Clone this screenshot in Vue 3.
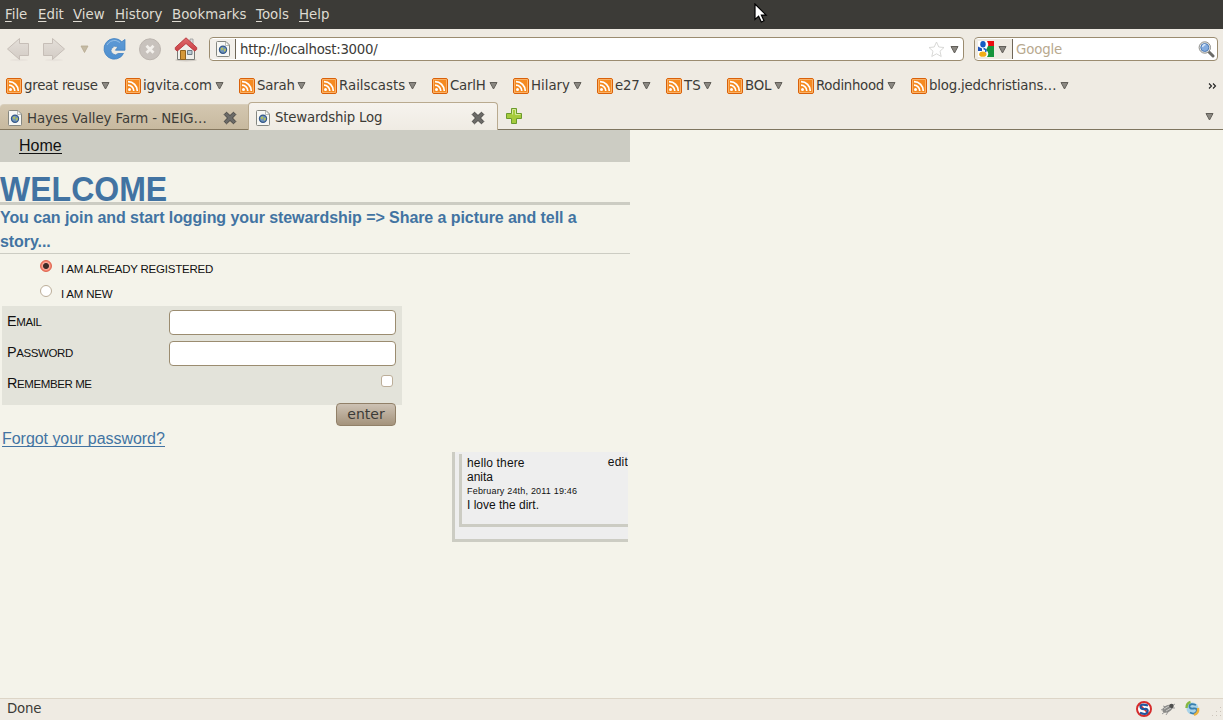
<script setup>
import { h } from 'vue'

const menus = [
  ['File', 33], ['Edit', 35], ['View', 42], ['History', 57],
  ['Bookmarks', 84], ['Tools', 43], ['Help', 40]
]
// label, slot width, letter spacing
const feeds = [
  ['great reuse', 119, -0.26], ['igvita.com', 114, -0.1], ['Sarah', 82, -0.2], ['Railscasts', 111, 0],
  ['CarlH', 81, -0.2], ['Hilary', 84, 0], ['e27', 69, -0.2], ['TS', 61, 0], ['BOL', 71, -0.2],
  ['Rodinhood', 113, -0.3], ['blog.jedchristians…', 173, -0.19]
]

const Arrow = () => h('svg', { width: 9, height: 9, viewBox: '0 0 9 9' }, [
  h('path', { d: 'M1 1.5h7L4.5 8z', fill: '#8b8882', stroke: '#625f59', 'stroke-width': 1 })
])
const PageIcon = () => h('svg', { width: 14, height: 16, viewBox: '0 0 14 16' }, [
  h('path', { d: 'M1.500.5h8.500l3.500 3.500v10.500q0 1-1 1h-11q-1 0-1-1v-13q0-1 1-1z', fill: '#f7f7f4', stroke: '#858781' }),
  h('path', { d: 'M9.500.8v3.700h3.700z', fill: '#fff', stroke: '#aaaca6', 'stroke-width': 0.8 }),
  h('circle', { cx: 7, cy: 8.7, r: 3.6, fill: '#6f94bd', stroke: '#34588a', 'stroke-width': 1.2 }),
  h('path', { d: 'M4.500 7.500l2-1.300 1 1.300-1.500 2.200zM7.500 8.500l2-1 .5 1.500-1.500 2z', fill: '#b3c05c' })
])
const CloseIcon = () => h('svg', { width: 14, height: 14, viewBox: '0 0 14 14' }, [
  h('path', { d: 'M3.500 1.200L7 4.500l3.500-3.300 2.300 2.300L9.500 7l3.300 3.500-2.300 2.300L7 9.500l-3.500 3.300-2.300-2.300L4.500 7 1.200 3.500z', fill: '#6c6b68', stroke: '#454441' })
])
</script>

<template>
  <div class="browser">
    <header class="menubar">
      <span v-for="m in menus" :key="m[0]" :style="{ width: m[1] + 'px' }"><u>{{ m[0][0] }}</u>{{ m[0].slice(1) }}</span>
      <svg class="cursor" width="14" height="21" viewBox="0 0 14 21">
        <path d="M1 1v15.500l3.600-3.300 2.700 5.800 2.700-1.200-2.600-5.700h4.700z" fill="#fff" stroke="#000" stroke-width="1.200" />
      </svg>
    </header>

    <div class="toolbar">
      <svg class="tools" width="209" height="40" viewBox="0 0 209 40">
        <defs>
          <linearGradient id="grey" x2="0" y2="1"><stop stop-color="#e4dfd9" /><stop offset="1" stop-color="#d3ccc5" /></linearGradient>
          <linearGradient id="blue" x2="0" y2="1"><stop stop-color="#5d99d5" /><stop offset="1" stop-color="#4f90d0" /></linearGradient>
          <linearGradient id="roof" x2="0" y2="1"><stop stop-color="#e06b6e" /><stop offset="1" stop-color="#cb3f44" /></linearGradient>
        </defs>
        <g fill="#e8e3dc"><ellipse cx="19" cy="31" rx="9" ry="1.200" /><ellipse cx="54" cy="31" rx="9" ry="1.200" /></g>
        <g fill="url(#grey)" stroke="#c6beb7">
          <path d="M7.500 20L19.500 9.500v5h9v12h-9v4z" />
          <path d="M64.500 20L52.500 9.500v5h-9v12h9v4z" />
        </g>
        <path d="M81 17h7l-3.500 6.500z" fill="#c5bba5" stroke="#b6aa91" stroke-width=".8" />
        <path d="M123.500 24.500h-5.300a4.200 4.200 0 1 1-.4-6.300l-2.400 3h9.600v-10.800l-3.200 2.400A10.300 10.300 0 1 0 123.500 24.500z" fill="url(#blue)" stroke="#4381c0" stroke-width=".8" />
        <path d="M107 16q3-5 9-4.500l4 2" fill="none" stroke="#91bce5" />
        <circle cx="150" cy="20.300" r="10.500" fill="#c8c2bd" stroke="#bbb4ae" />
        <path d="M146.500 16.800l7 7m0-7l-7 7" stroke="#f3f0ec" stroke-width="2.800" />
        <ellipse cx="186" cy="31" rx="11" ry="1.500" fill="#d0cbc4" />
        <path d="M177.500 19l8.500-7 8.500 7v11.500h-17z" fill="#efeeea" stroke="#777a75" />
        <path d="M190 10h3v5h-3z" fill="#ddd" stroke="#999" stroke-width=".8" />
        <path d="M175.300 20.500v-2L186 8.800l10.700 9.700v2l-2 1.500-8.700-7.500-8.700 7.500z" fill="url(#roof)" stroke="#b5363b" stroke-width=".9" />
        <path d="M180.500 21.500h5v9h-5z" fill="#d4983a" stroke="#94631c" />
        <path d="M187.500 21.500h4.500v4h-4.500z" fill="#b9cbd5" stroke="#6e7d87" />
      </svg>
      <div class="field address">
        <span class="site"><PageIcon /></span>
        <span class="url">http://localhost:3000/</span>
        <svg width="17" height="17" viewBox="0 0 17 17"><path d="M8.500 1l2.300 5 5.200.5-4 3.700 1.200 5.300-4.700-2.700-4.700 2.700L5 10.200 1 6.500 6.200 6z" fill="#fff" stroke="#d4d4d1" stroke-width=".9" /></svg>
        <Arrow class="field-arrow" />
      </div>
      <div class="field search">
        <span class="engine">
          <svg width="16" height="16" viewBox="0 0 16 16">
            <path d="M0 0h16v16H0z" fill="#fff" />
            <path d="M9 0h7v6h-6q1-3-1-6z" fill="#ed0c10" />
            <path d="M10 5h6v11H9q3-4-1-7z" fill="#16953c" />
            <path d="M0 5.500l4 2v2.500H0z" fill="#1c52bb" />
            <ellipse cx="5" cy="3.300" rx="2.700" ry="3.300" fill="#155bc3" />
            <path d="M5.500 7.500q3.500 1 2 3.500" fill="none" stroke="#155bc3" stroke-width="1.600" />
            <ellipse cx="4.800" cy="13.200" rx="3.600" ry="2.600" fill="#f1ad16" />
          </svg>
          <Arrow />
        </span>
        <span class="hint">Google</span>
        <svg width="17" height="17" viewBox="0 0 17 17">
          <path d="M10.500 10.500l4.500 4.500" stroke="#6b6b68" stroke-width="3" stroke-linecap="round" />
          <circle cx="6.800" cy="6.500" r="5.700" fill="#e7e7e4" stroke="#90908c" />
          <circle cx="6.800" cy="6.500" r="4" fill="#84acdf" stroke="#507db6" />
          <path d="M4.500 6q.5-2.500 3-2.500" stroke="#d9e9fb" stroke-width="1.300" fill="none" />
        </svg>
      </div>
    </div>

    <div class="bookmarks">
      <span v-for="f in feeds" :key="f[0]" class="feed" :style="{ width: f[1] + 'px', letterSpacing: f[2] + 'px' }">
        <svg width="16" height="16" viewBox="0 0 16 16">
          <rect x=".5" y=".5" width="15" height="15" rx="1.500" fill="#f58a21" stroke="#d9610a" />
          <path d="M1.500 1.500h13v13h-13z" fill="none" stroke="#fbb267" />
          <circle cx="4.500" cy="11.600" r="1.500" fill="#fff" />
          <path d="M3 7.200a5.800 5.800 0 0 1 5.800 5.800M3 3.700a9.300 9.300 0 0 1 9.300 9.300" fill="none" stroke="#fff" stroke-width="1.700" />
        </svg>
        <span>{{ f[0] }}</span><Arrow />
      </span>
      <svg class="more" width="9" height="8" viewBox="0 0 9 8"><path d="M1 1.500l2.500 2.500L1 6.500M5 1.500l2.500 2.500L5 6.500" fill="none" stroke="#222" stroke-width="1.100" /></svg>
    </div>

    <div class="tabs">
      <div class="tab idle"><PageIcon /><span>Hayes Valley Farm - NEIG…</span><CloseIcon /></div>
      <div class="tab current"><PageIcon /><span>Stewardship Log</span><CloseIcon /></div>
      <div class="strip">
        <svg width="18" height="18" viewBox="0 0 18 18">
          <path d="M6.500 1.500h5v5h5v5h-5v5h-5v-5h-5v-5h5z" fill="#a5cb3c" stroke="#6b9a2c" />
          <path d="M7.500 7.500v-5h3v5h5" fill="none" stroke="#d6e99a" />
        </svg>
        <Arrow class="list-arrow" />
      </div>
    </div>

    <main>
      <div class="column">
        <nav><a>Home</a></nav>
        <h1><span>WELCOME</span></h1>
        <h2>You can join and start logging your stewardship =&gt; Share a picture and tell a story...</h2>
        <div class="choice"><i class="radio on"></i><span>i am already registered</span></div>
        <div class="choice"><i class="radio"></i><span>i am new</span></div>
        <form>
          <div class="row"><label>Email</label><b class="input"></b></div>
          <div class="row"><label>Password</label><b class="input"></b></div>
          <div class="row"><label>Remember me</label><b class="check"></b></div>
        </form>
        <div class="submit"><button>enter</button></div>
        <a class="forgot">Forgot your password?</a>
        <section class="card">
          <article>
            <div class="line"><span class="title">hello there</span><span class="edit">edit</span></div>
            <div class="line">anita</div>
            <div class="line date">February 24th, 2011 19:46</div>
            <div class="line">I love the dirt.</div>
          </article>
        </section>
      </div>
    </main>

    <footer>
      <span>Done</span>
      <svg width="100" height="21" viewBox="0 0 100 21">
        <circle cx="21" cy="10" r="7" fill="#fff" stroke="#d62c2c" stroke-width="2" />
        <path d="M16 5l10 10" stroke="#d62c2c" stroke-width="1.700" />
        <path d="M25 6.500q-7.500-2-7.500 1t4 2.500 3 3-7.500 .8" fill="none" stroke="#24579d" stroke-width="2.200" />
        <path d="M38 11l4-2m-3 6l4-3m0 4l2-3m4-6l3-2m-3 4l3 0m-12-2l3 1" stroke="#999" />
        <ellipse cx="44.500" cy="9.800" rx="5.500" ry="3.400" transform="rotate(-28 44.500 9.800)" fill="#8b8b89" />
        <circle cx="48.500" cy="7" r="2.200" fill="#4e4e4d" />
        <path d="M41 10l5-3m-3 5l5-3" stroke="#c8c8c5" />
        <circle cx="69.500" cy="9.500" r="6" fill="#a9d3e8" />
        <path d="M73 6q-6-2-6.500 1t4 2.500 3 3-6.500 1" fill="none" stroke="#397fae" stroke-width="1.800" />
        <path d="M63.500 9q0-5 4-6" fill="none" stroke="#86b840" stroke-width="2.400" />
        <path d="M75 9q1 5-4 7" fill="none" stroke="#ebb23c" stroke-width="2.400" />
        <g fill="#cbc4ba"><path d="M97 8h1v1h-1zM93 12h1v1h-1zM97 12h1v1h-1zM89 16h1v1h-1zM93 16h1v1h-1zM97 16h1v1h-1z" /></g>
      </svg>
    </footer>
  </div>
</template>

<style>
body { margin: 0; overflow: hidden; }
</style>

<style scoped>
* { box-sizing: border-box; }
svg { flex: none; display: block; }
.browser { width: 1223px; height: 720px; display: flex; flex-direction: column; background: #f4f3ea; color: #3c3b37; font: 13.33px/17px "DejaVu Sans", sans-serif; white-space: nowrap; }
.menubar { height: 29px; flex: none; background: #3c3b37; color: #dfdbd2; padding: 6px 0 0 5px; display: flex; position: relative; }
.menubar u { text-underline-offset: 2px; text-decoration-thickness: 1px; }
.cursor { position: absolute; left: 754px; top: 3px; }
.toolbar { height: 40px; flex: none; display: flex; align-items: center; background: #efebe3; padding-right: 5px; }
.field { height: 24px; background: #fff; border: 1px solid #9b8c70; border-radius: 4px; display: flex; align-items: center; overflow: hidden; }
.address { width: 755px; margin-right: 10px; padding-right: 4px; }
.site { width: 26px; height: 20px; border-right: 1px solid #6f6657; background: #f3f0eb; display: flex; align-items: center; justify-content: center; }
.url { flex: 1; padding-left: 4px; letter-spacing: -.28px; }
.field-arrow { margin-left: 5px; }
.search { width: 244px; padding-right: 2px; }
.engine { width: 38px; height: 20px; border-right: 1px solid #6f6657; background: #efebe3; display: flex; align-items: center; padding-left: 3px; gap: 4px; }
.hint { flex: 1; padding-left: 3px; color: #b8a98f; letter-spacing: -.15px; }
.bookmarks { height: 33px; flex: none; display: flex; align-items: center; background: #efebe3; padding-left: 6px; }
.feed { flex: none; display: flex; align-items: center; padding-right: 15px; }
.feed span { margin: 0 auto 0 2px; }
.more { margin: 0 6px 0 auto; }
.tabs { height: 28px; flex: none; background: #efebe3; display: flex; align-items: flex-end; }
.tab { display: flex; align-items: center; flex: none; }
.tab span { flex: 1; padding-left: 5px; letter-spacing: -.07px; }
.idle { width: 248px; height: 26px; padding: 2px 11px 0 8px; background: linear-gradient(#d3c7b0, #c7b99f); border-top: 1px solid #d8cebb; border-bottom: 1px solid #85775e; border-radius: 4px 0 0 0; }
.current { width: 250px; height: 28px; padding: 2px 12px 0 7px; background: linear-gradient(#f6f3ee, #efebe3); border: 1px solid #b9aa8f; border-bottom: 0; border-radius: 4px 4px 0 0; }
.tab.current span { letter-spacing: -.2px; }
.strip { flex: 1; height: 28px; border-bottom: 1px solid #7e755f; display: flex; align-items: center; justify-content: space-between; padding: 0 9px 0 7px; }
.list-arrow { margin-top: 2px; }
main { flex: 1; font: 16px/24px "Liberation Sans", Arial, sans-serif; color: #111; }
.column { width: 630px; }
nav { height: 32px; background: #ccccc3; padding: 7px 0 0 19px; line-height: 17px; }
nav a { display: inline-block; height: 17px; border-bottom: 1px solid #111; }
h1 { margin: 0; height: 43px; border-bottom: 3px solid #ccccc3; color: #4273a2; font-size: 34.500px; line-height: 36px; padding-top: 9px; }
h1 span { display: inline-block; transform: scaleX(.928); transform-origin: 0 0; }
h2 { margin: 0; height: 49px; padding-top: 1px; border-bottom: 1px solid #ccccc3; color: #4273a2; font-size: 16px; line-height: 24px; letter-spacing: -.07px; white-space: normal; }
.choice { height: 25px; padding-left: 40px; display: flex; font-size: 11.500px; line-height: 30px; letter-spacing: -.21px; text-transform: uppercase; }
.choice span { padding-left: 9px; }
.radio { width: 12px; height: 12px; margin-top: 6px; border: 1px solid #bcae99; border-radius: 50%; background: #fff; }
.on { border-color: #de6550; background: radial-gradient(circle, #3c2b27 0 2.500px, #f9a898 3.500px, #f36a53 5.500px); }
form { width: 400px; height: 99px; margin: 2px 0 0 2px; background: #e3e3da; padding: 4px 6px 0 5px; }
.row { height: 31px; display: flex; justify-content: space-between; }
label { display: block; font-size: 11.500px; line-height: 23px; letter-spacing: -.4px; text-transform: uppercase; }
label::first-letter { font-size: 14.400px; }
.input { width: 227px; height: 25px; background: #fff; border: 1px solid #9b8c70; border-radius: 4px; }
.check { width: 12px; height: 12px; margin: 3px 3px; background: #fff; border: 1px solid #bcae99; border-radius: 3px; }
.submit { margin: -2px 0 0; width: 396px; height: 24px; display: flex; justify-content: flex-end; }
button { width: 60px; height: 23px; padding: 0 0 1px; border: 1px solid #918068; border-radius: 4px; background: linear-gradient(#cdc2b4, #a4937c); color: #3c3b37; font: 14px/20px "DejaVu Sans", sans-serif; }
.forgot { display: block; width: fit-content; height: 20px; margin-left: 2px; color: #4273a2; line-height: 24px; letter-spacing: -.04px; border-bottom: 1px solid #4273a2; }
.card { width: 176px; height: 90px; margin: 5px 0 0 452px; background: #eee; border-left: 3px solid #ccccc3; border-bottom: 3px solid #ccccc3; padding: 2px 0 0 4px; overflow: hidden; }
article { height: 73px; border-left: 3px solid #ccccc3; border-bottom: 3px solid #ccccc3; padding: 2px 0 0 5px; font-size: 12px; line-height: 14px; }
.line { height: 14px; display: flex; justify-content: space-between; }
.title { letter-spacing: .15px; }
.edit { margin-top: -1px; letter-spacing: .2px; }
.date { font-size: 9px; letter-spacing: .19px; }
footer { height: 22px; flex: none; border-top: 1px solid #ddd5c7; background: #efebe3; display: flex; justify-content: space-between; padding-left: 7px; line-height: 19px; letter-spacing: -.2px; }
</style>
